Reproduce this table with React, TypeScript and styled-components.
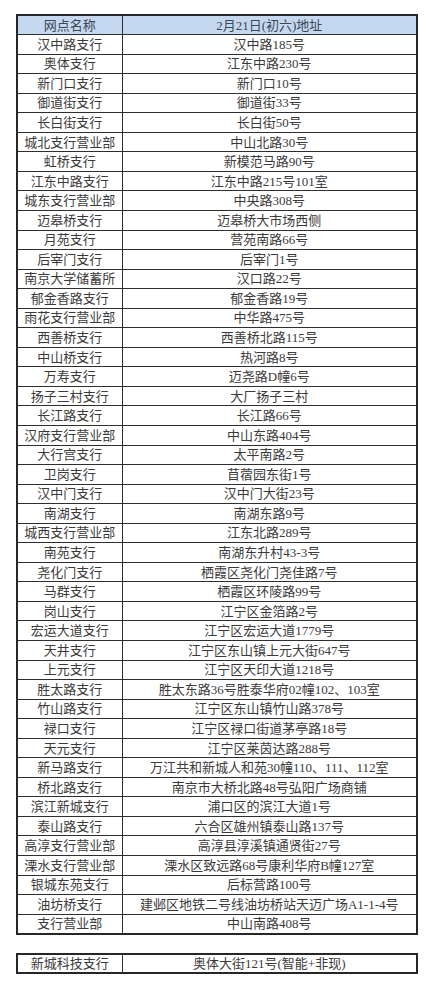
import styled, { createGlobalStyle } from "styled-components";

const GlobalStyle = createGlobalStyle`
  html, body {
    margin: 0;
    padding: 0;
    background: #ffffff;
  }

  body {
    font-family: "Liberation Serif", "Noto Sans CJK SC", serif;
    color: #383838;
  }
`;

const Page = styled.div`
  width: 429px;
  padding-top: 14px;
  padding-left: 16px;
  box-sizing: border-box;
`;

const Table = styled.table<{ $gap?: number }>`
  width: 402px;
  table-layout: fixed;
  border-collapse: collapse;
  border: 2px solid #262626;
  margin-top: ${(p) => p.$gap ?? 0}px;
`;

const Row = styled.tr<{ $h?: number }>`
  height: ${(p) => p.$h ?? 19.55}px;
`;

const Cell = styled.td<{ $head?: boolean }>`
  border: 1px solid #2e2e2e;
  padding: 0;
  text-align: center;
  vertical-align: middle;
  font-size: 13px;
  font-weight: normal;
  line-height: 17px;
  white-space: nowrap;
  overflow: hidden;
  font-family: "Liberation Serif", "Noto Sans CJK SC", serif;
  background: ${(p) => (p.$head ? "#c4d9ef" : "transparent")};
  color: ${(p) => (p.$head ? "#3c4656" : "#3a3a3a")};
`;

const NameCol = styled.col`
  width: 105px;
`;

const branches: [string, string][] = [
  ["汉中路支行", "汉中路185号"],
  ["奥体支行", "江东中路230号"],
  ["新门口支行", "新门口10号"],
  ["御道街支行", "御道街33号"],
  ["长白街支行", "长白街50号"],
  ["城北支行营业部", "中山北路30号"],
  ["虹桥支行", "新模范马路90号"],
  ["江东中路支行", "江东中路215号101室"],
  ["城东支行营业部", "中央路308号"],
  ["迈皋桥支行", "迈皋桥大市场西侧"],
  ["月苑支行", "营苑南路66号"],
  ["后宰门支行", "后宰门1号"],
  ["南京大学储蓄所", "汉口路22号"],
  ["郁金香路支行", "郁金香路19号"],
  ["雨花支行营业部", "中华路475号"],
  ["西善桥支行", "西善桥北路115号"],
  ["中山桥支行", "热河路8号"],
  ["万寿支行", "迈尧路D幢6号"],
  ["扬子三村支行", "大厂扬子三村"],
  ["长江路支行", "长江路66号"],
  ["汉府支行营业部", "中山东路404号"],
  ["大行宫支行", "太平南路2号"],
  ["卫岗支行", "苜蓿园东街1号"],
  ["汉中门支行", "汉中门大街23号"],
  ["南湖支行", "南湖东路9号"],
  ["城西支行营业部", "江东北路289号"],
  ["南苑支行", "南湖东升村43-3号"],
  ["尧化门支行", "栖霞区尧化门尧佳路7号"],
  ["马群支行", "栖霞区环陵路99号"],
  ["岗山支行", "江宁区金箔路2号"],
  ["宏运大道支行", "江宁区宏运大道1779号"],
  ["天井支行", "江宁区东山镇上元大街647号"],
  ["上元支行", "江宁区天印大道1218号"],
  ["胜太路支行", "胜太东路36号胜泰华府02幢102、103室"],
  ["竹山路支行", "江宁区东山镇竹山路378号"],
  ["禄口支行", "江宁区禄口街道茅亭路18号"],
  ["天元支行", "江宁区莱茵达路288号"],
  ["新马路支行", "万江共和新城人和苑30幢110、111、112室"],
  ["桥北路支行", "南京市大桥北路48号弘阳广场商铺"],
  ["滨江新城支行", "浦口区的滨江大道1号"],
  ["泰山路支行", "六合区雄州镇泰山路137号"],
  ["高淳支行营业部", "高淳县淳溪镇通贤街27号"],
  ["溧水支行营业部", "溧水区致远路68号康利华府B幢127室"],
  ["银城东苑支行", "后标营路100号"],
  ["油坊桥支行", "建邺区地铁二号线油坊桥站天迈广场A1-1-4号"],
  ["支行营业部", "中山南路408号"],
];

const App = () => {
  return (
    <Page>
      <GlobalStyle />
      <Table>
        <colgroup>
          <NameCol />
          <col />
        </colgroup>
        <thead>
          <Row>
            <Cell as="th" $head>
              网点名称
            </Cell>
            <Cell as="th" $head>
              2月21日(初六)地址
            </Cell>
          </Row>
        </thead>
        <tbody>
          {branches.map(([name, addr]) => (
            <Row key={name}>
              <Cell>{name}</Cell>
              <Cell>{addr}</Cell>
            </Row>
          ))}
        </tbody>
      </Table>
      <Table $gap={18}>
        <colgroup>
          <NameCol />
          <col />
        </colgroup>
        <tbody>
          <Row $h={18.5}>
            <Cell>新城科技支行</Cell>
            <Cell>奥体大街121号(智能+非现)</Cell>
          </Row>
        </tbody>
      </Table>
    </Page>
  );
};

export default App;
